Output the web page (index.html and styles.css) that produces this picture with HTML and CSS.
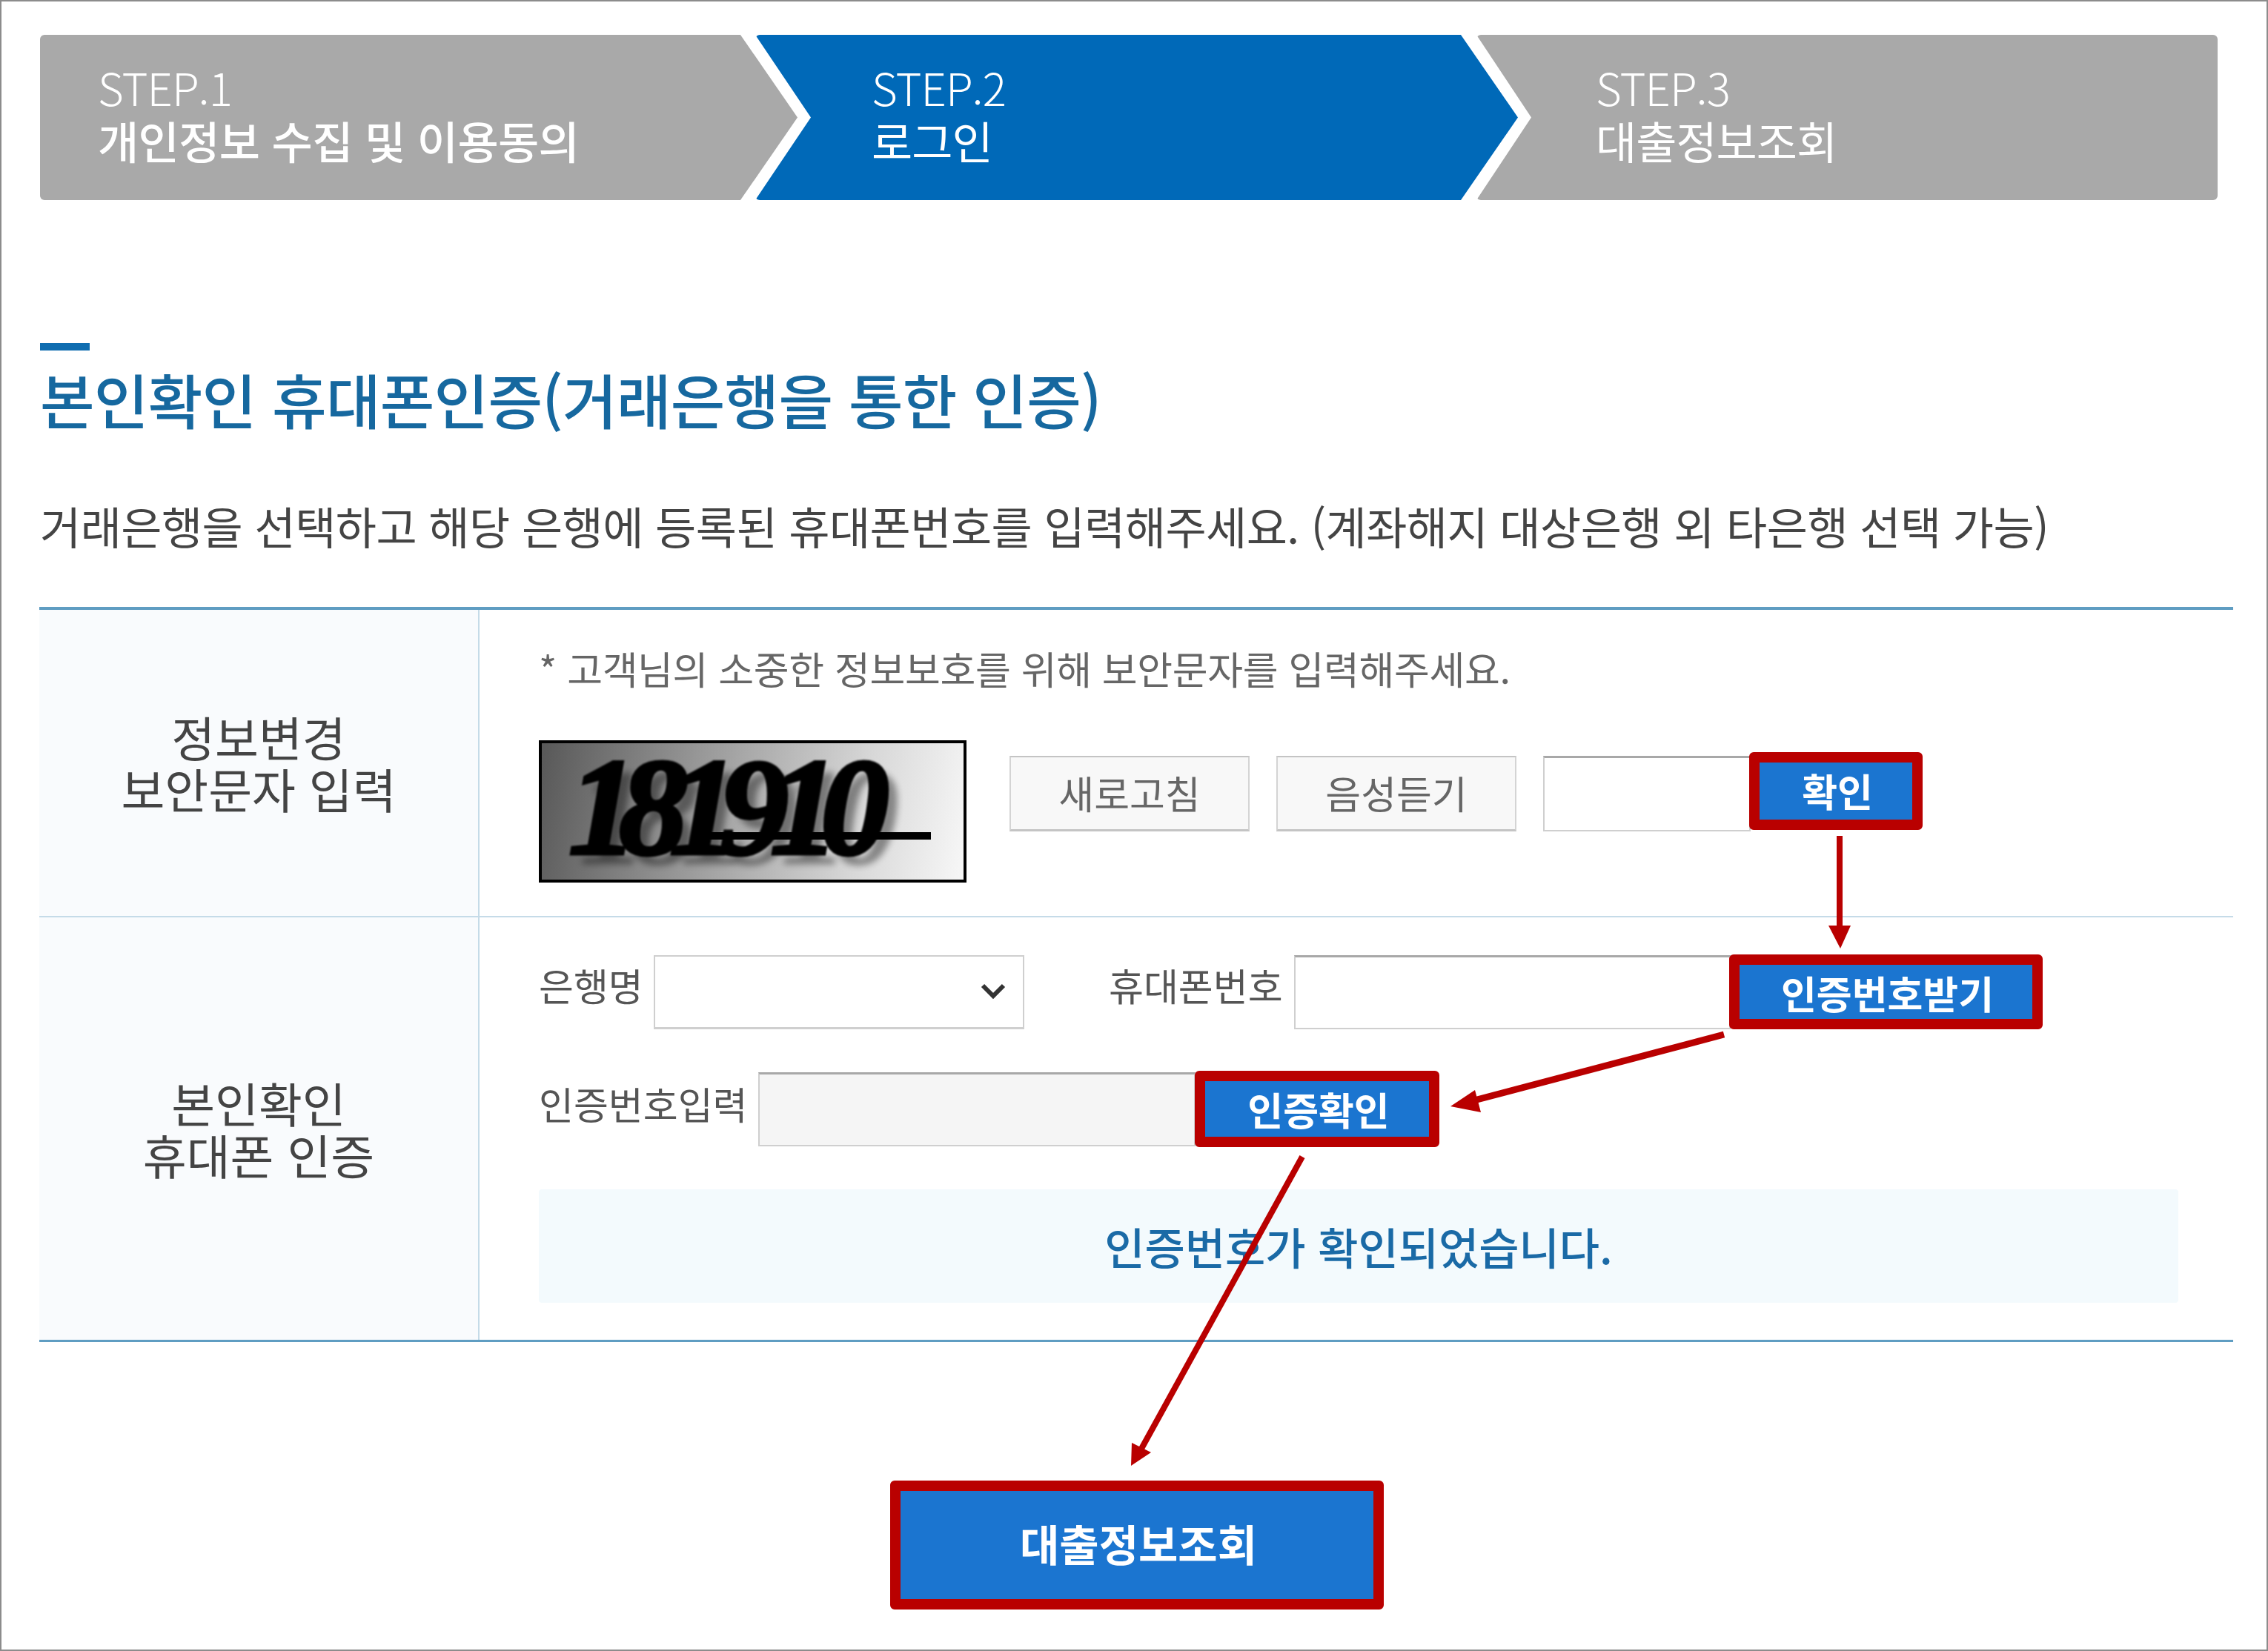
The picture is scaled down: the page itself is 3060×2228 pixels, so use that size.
FILE: index.html
```html
<!DOCTYPE html>
<html lang="ko">
<head>
<meta charset="utf-8">
<title>본인확인 휴대폰인증</title>
<link rel="stylesheet" href="styles.css">
</head>
<body>
<main class="frame">
  <ol class="steps">
    <li class="step step-first"><span class="step-no">STEP.1</span><strong class="step-name">개인정보 수집 및 이용동의</strong></li>
    <li class="step step-mid"><span class="step-no">STEP.2</span><span class="step-name">로그인</span></li>
    <li class="step step-last"><span class="step-no">STEP.3</span><span class="step-name">대출정보조회</span></li>
  </ol>

  <div class="title-bar"></div>
  <h1 class="title">본인확인 휴대폰인증(거래은행을 통한 인증)</h1>
  <p class="desc">거래은행을 선택하고 해당 은행에 등록된 휴대폰번호를 입력해주세요. (계좌해지 대상은행 외 타은행 선택 가능)</p>

  <section class="table">
    <div class="row row-captcha">
      <h2 class="head">정보변경<br>보안문자 입력</h2>
      <div class="cell">
        <p class="note">* 고객님의 소중한 정보보호를 위해 보안문자를 입력해주세요.</p>
        <div class="captcha-row">
          <div class="captcha"><span class="captcha-text">181910</span></div>
          <div class="captcha-controls">
            <button class="btn-plain">새로고침</button>
            <button class="btn-plain">음성듣기</button>
            <input class="field field-code" type="text">
            <button class="btn-go btn-confirm">확인</button>
          </div>
        </div>
      </div>
    </div>
    <div class="row row-phone">
      <h2 class="head">본인확인<br>휴대폰 인증</h2>
      <div class="cell cell-phone">
        <div class="form-line">
          <label class="label label-bank">은행명</label>
          <div class="select-wrap">
            <select class="select"></select>
            <svg class="chevron" viewBox="0 0 36 24"><path d="M4 5 L18 19 L32 5" fill="none" stroke="#333" stroke-width="6"/></svg>
          </div>
          <label class="label label-phone">휴대폰번호</label>
          <input class="field field-phone" type="text">
          <button class="btn-go btn-request">인증번호받기</button>
        </div>
        <div class="form-line form-line-second">
          <label class="label label-auth">인증번호입력</label>
          <input class="field field-auth" type="text" disabled>
          <button class="btn-go btn-verify">인증확인</button>
        </div>
        <div class="message">인증번호가 확인되었습니다.</div>
      </div>
    </div>
  </section>

  <div class="submit-line"><button class="btn-go btn-submit">대출정보조회</button></div>

  <svg class="arrows" viewBox="0 0 3060 2228">
    <path class="arrow-line" d="M2482 1128 L2482 1252" stroke-width="8"/>
    <path class="arrow-head" d="M2467 1249 L2497 1249 L2483 1280 Z"/>
    <path class="arrow-line" d="M2326 1396 L1985 1486" stroke-width="9"/>
    <path class="arrow-head" d="M1990 1471 L1998 1501 L1957 1493 Z"/>
    <path class="arrow-line" d="M1757 1561 L1540 1955" stroke-width="8"/>
    <path class="arrow-head" d="M1527 1947 L1553 1960 L1526 1978 Z"/>
  </svg>
</main>
</body>
</html>
```
FILE: styles.css
```css
* { box-sizing: border-box; }
html, body { margin: 0; padding: 0; background: #fff; }
body { font-family: "Noto Sans CJK KR", "Noto Sans", sans-serif; color: #444; }

.frame {
  position: relative;
  width: 3060px;
  height: 2228px;
  border: 2px solid #8c8c8c;
  padding: 45px 0 0 52px;
  overflow: hidden;
}

.steps { display: flex; list-style: none; margin: 0; padding: 0; height: 223px; width: 2938px; }
.step {
  display: flex;
  flex-direction: column;
  justify-content: center;
  color: #fff;
  background: #a9a9a9;
  font-size: 60px;
  line-height: 72px;
  border-radius: 6px;
  padding-bottom: 12px;
}
.step-no { font-weight: 300; letter-spacing: -1px; }
.step-name { font-weight: 400; letter-spacing: -1px; }
.step-first { width: 1022px; padding-left: 78px; clip-path: polygon(0 0, 945px 0, 100% 50%, 945px 100%, 0 100%); }
.step-first .step-name { font-weight: 500; letter-spacing: -0.6px; }
.step-mid { width: 1029px; margin-left: -57px; padding-left: 157px; background: #0069b8; clip-path: polygon(0 0, 952px 0, 100% 50%, 952px 100%, 0 100%, 75px 50%); }
.step-last { flex: 1; margin-left: -56px; padding-left: 161px; clip-path: polygon(0 0, 100% 0, 100% 100%, 0 100%, 74px 50%); }

.title-bar { width: 67px; height: 10px; background: #0f6db0; margin-top: 193px; }
.title { margin: 14px 0 0; font-size: 80px; line-height: 100px; font-weight: 500; color: #16689f; letter-spacing: -0.75px; }
.desc { margin: 82px 0 0; font-size: 60px; line-height: 80px; color: #444; letter-spacing: -0.55px; }

.table { width: 2960px; margin: 70px 0 0 -1px; border-top: 4px solid #5f9dc2; border-bottom: 3px solid #5f9dc2; }
.row { display: flex; }
.row-captcha { height: 415px; border-bottom: 2px solid #c5dbe8; }
.row-phone { height: 570px; }
.head {
  width: 594px;
  margin: 0;
  flex: none;
  display: flex;
  align-items: center;
  justify-content: center;
  text-align: center;
  font-size: 64px;
  line-height: 70px;
  font-weight: 400;
  color: #444;
  background: #f9fbfd;
  border-right: 2px solid #c5dbe8;
  padding-bottom: 3px;
}
.cell { flex: 1; padding: 44px 0 0 80px; }
.cell-phone { padding-top: 50px; }

.note { margin: 0; font-size: 52px; line-height: 70px; color: #666; letter-spacing: -0.35px; }
.captcha-row { display: flex; align-items: flex-start; margin-top: 62px; }
.captcha {
  position: relative;
  width: 577px;
  height: 192px;
  flex: none;
  border: 4px solid #000;
  background: linear-gradient(100deg, #585858 0%, #969696 35%, #d8d8d8 75%, #f7f7f7 100%);
}
.captcha-text {
  display: block;
  padding: 0 0 0 36px;
  font-family: "Liberation Serif", serif;
  font-style: italic;
  font-weight: 700;
  font-size: 186px;
  line-height: 172px;
  letter-spacing: -25px;
  color: #000;
  -webkit-text-stroke: 5px #000;
  text-shadow: 14px 14px 9px rgba(0, 0, 0, .4);
  filter: blur(1px);
}
.captcha::after {
  content: "";
  position: absolute;
  left: 220px;
  right: 44px;
  top: 120px;
  height: 10px;
  background: #000;
}
.captcha-controls { display: flex; margin: 21px 0 0 58px; }

.btn-plain {
  width: 324px;
  height: 102px;
  margin-right: 36px;
  font: inherit;
  font-size: 52px;
  color: #666;
  background: #f8f8f8;
  border: 2px solid #d4d4d4;
  border-top-color: #c4c4c4;
  border-bottom: 3px solid #c4c4c4;
  padding: 0 0 3px;
}
.field {
  height: 100px;
  background: #fff;
  border: 2px solid #cfcfcf;
  border-top: 3px solid #a8a8a8;
  padding: 0;
  flex: none;
}
.field-code { width: 280px; height: 102px; }
.field-phone { width: 589px; }
.field-auth { width: 590px; background: #f5f5f5; }

.btn-go {
  flex: none;
  font: inherit;
  font-weight: 700;
  font-size: 52px;
  color: #fff;
  background: #1b75d0;
  border: 14px solid #b90000;
  border-radius: 6px;
  padding: 0 0 4px 4px;
}
.btn-confirm { width: 234px; height: 105px; margin: -5px 0 0 -2px; padding-bottom: 6px; }
.btn-request { width: 423px; height: 101px; margin-left: -2px; padding-bottom: 13px; }
.btn-verify { width: 330px; height: 103px; margin-left: -1px; padding-bottom: 11px; }
.btn-submit { width: 666px; height: 174px; font-size: 58px; padding-bottom: 6px; }

.form-line { display: flex; align-items: center; height: 101px; }
.form-line-second { margin-top: 56px; height: 103px; }
.label { flex: none; font-size: 51px; line-height: 70px; color: #555; padding-bottom: 20px; }
.form-line-second .label { padding-bottom: 15px; }
.label-bank { width: 155px; }
.label-phone { width: 250px; margin-left: 114px; }
.label-auth { width: 296px; }
.select-wrap { position: relative; width: 500px; height: 100px; flex: none; }
.select { display: block; width: 100%; height: 100%; appearance: none; background: #fff; border: 2px solid #cfcfcf; border-bottom-width: 3px; border-radius: 0; }
.chevron { position: absolute; right: 24px; top: 36px; width: 36px; height: 24px; }

.message {
  width: 2212px;
  height: 153px;
  margin-top: 57px;
  display: flex;
  align-items: center;
  justify-content: center;
  font-size: 59px;
  font-weight: 500;
  color: #1a6aa6;
  background: #f3fafd;
  border-radius: 4px;
}

.submit-line { margin: 187px 0 0 1147px; }

.arrows { position: absolute; left: -2px; top: -2px; width: 3060px; height: 2228px; pointer-events: none; }
.arrow-line { stroke: #b90000; fill: none; }
.arrow-head { fill: #b90000; }
```
